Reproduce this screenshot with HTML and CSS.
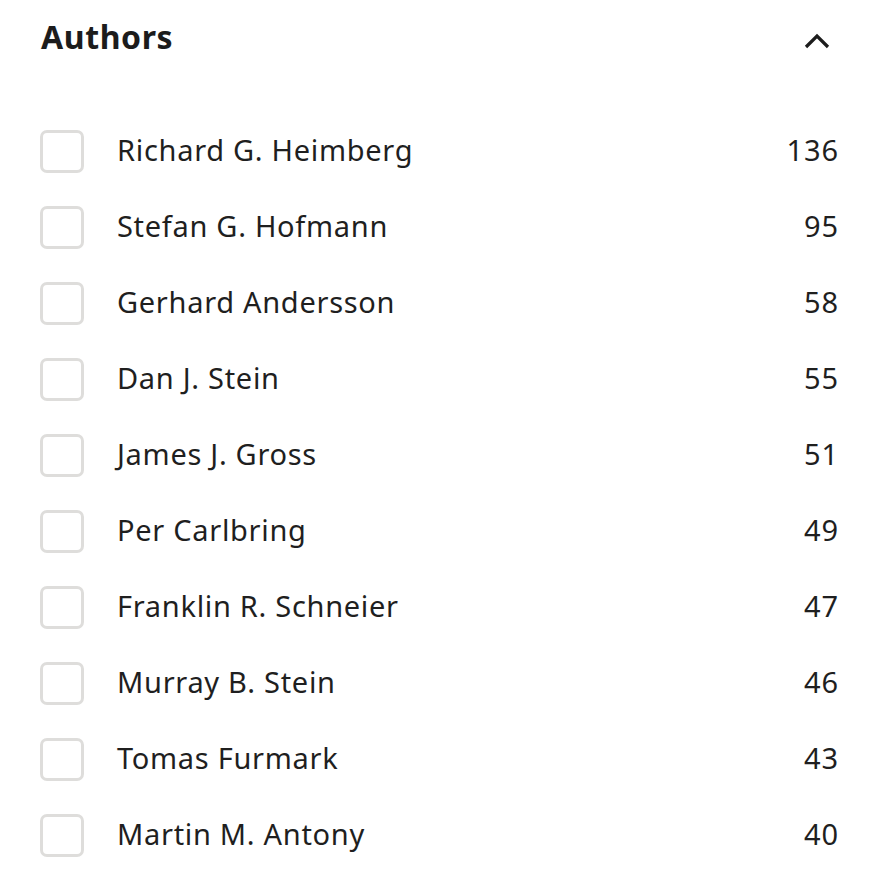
FILE: index.html
```html
<!DOCTYPE html>
<html>
<head>
<meta charset="utf-8">
<link rel="stylesheet" href="styles.css">
</head>
<body>
<section class="panel">
  <div class="panel-head">
    <h2 class="panel-title">Authors</h2>
    <svg class="chevron" width="26" height="16" viewBox="0 0 26 16"><path d="M2 14 L13 3 L24 14" fill="none" stroke="#1c1c1c" stroke-width="3.2"/></svg>
  </div>
  <ul class="list">
    <li class="row"><span class="box"></span><span class="name">Richard G. Heimberg</span><span class="count">136</span></li>
    <li class="row"><span class="box"></span><span class="name">Stefan G. Hofmann</span><span class="count">95</span></li>
    <li class="row"><span class="box"></span><span class="name">Gerhard Andersson</span><span class="count">58</span></li>
    <li class="row"><span class="box"></span><span class="name">Dan J. Stein</span><span class="count">55</span></li>
    <li class="row"><span class="box"></span><span class="name">James J. Gross</span><span class="count">51</span></li>
    <li class="row"><span class="box"></span><span class="name">Per Carlbring</span><span class="count">49</span></li>
    <li class="row"><span class="box"></span><span class="name">Franklin R. Schneier</span><span class="count">47</span></li>
    <li class="row"><span class="box"></span><span class="name">Murray B. Stein</span><span class="count">46</span></li>
    <li class="row"><span class="box"></span><span class="name">Tomas Furmark</span><span class="count">43</span></li>
    <li class="row"><span class="box"></span><span class="name">Martin M. Antony</span><span class="count">40</span></li>
  </ul>
</section>
</body>
</html>
```

FILE: styles.css
```css
* { box-sizing: border-box; }
html, body { margin: 0; padding: 0; background: #fff; }
body { font-family: "Noto Sans", "Open Sans", sans-serif; color: #1f1f1f; }
.panel { padding: 0 48px 0 40px; }
.panel-head { height: 76px; display: flex; align-items: center; justify-content: space-between; margin-bottom: 37px; }
.panel-title { margin: 0 0 4px; font-size: 32px; font-weight: 700; letter-spacing: 0.6px; color: #1c1c1c; padding-left: 1px; }
.chevron { margin-right: 8px; margin-top: 6px; display: block; }
.list { list-style: none; margin: 0; padding: 0; }
.row { height: 76px; display: flex; align-items: center; }
.box { width: 44px; height: 43px; border: 3px solid #dedddb; border-radius: 7px; flex: none; }
.name { margin-left: 33px; font-size: 29px; letter-spacing: 0.7px; flex: 1; color: #1f1f1f; padding-bottom: 4px; }
.count { font-size: 29px; letter-spacing: 0.9px; margin-right: -1px; color: #1f1f1f; padding-bottom: 4px; }
```
